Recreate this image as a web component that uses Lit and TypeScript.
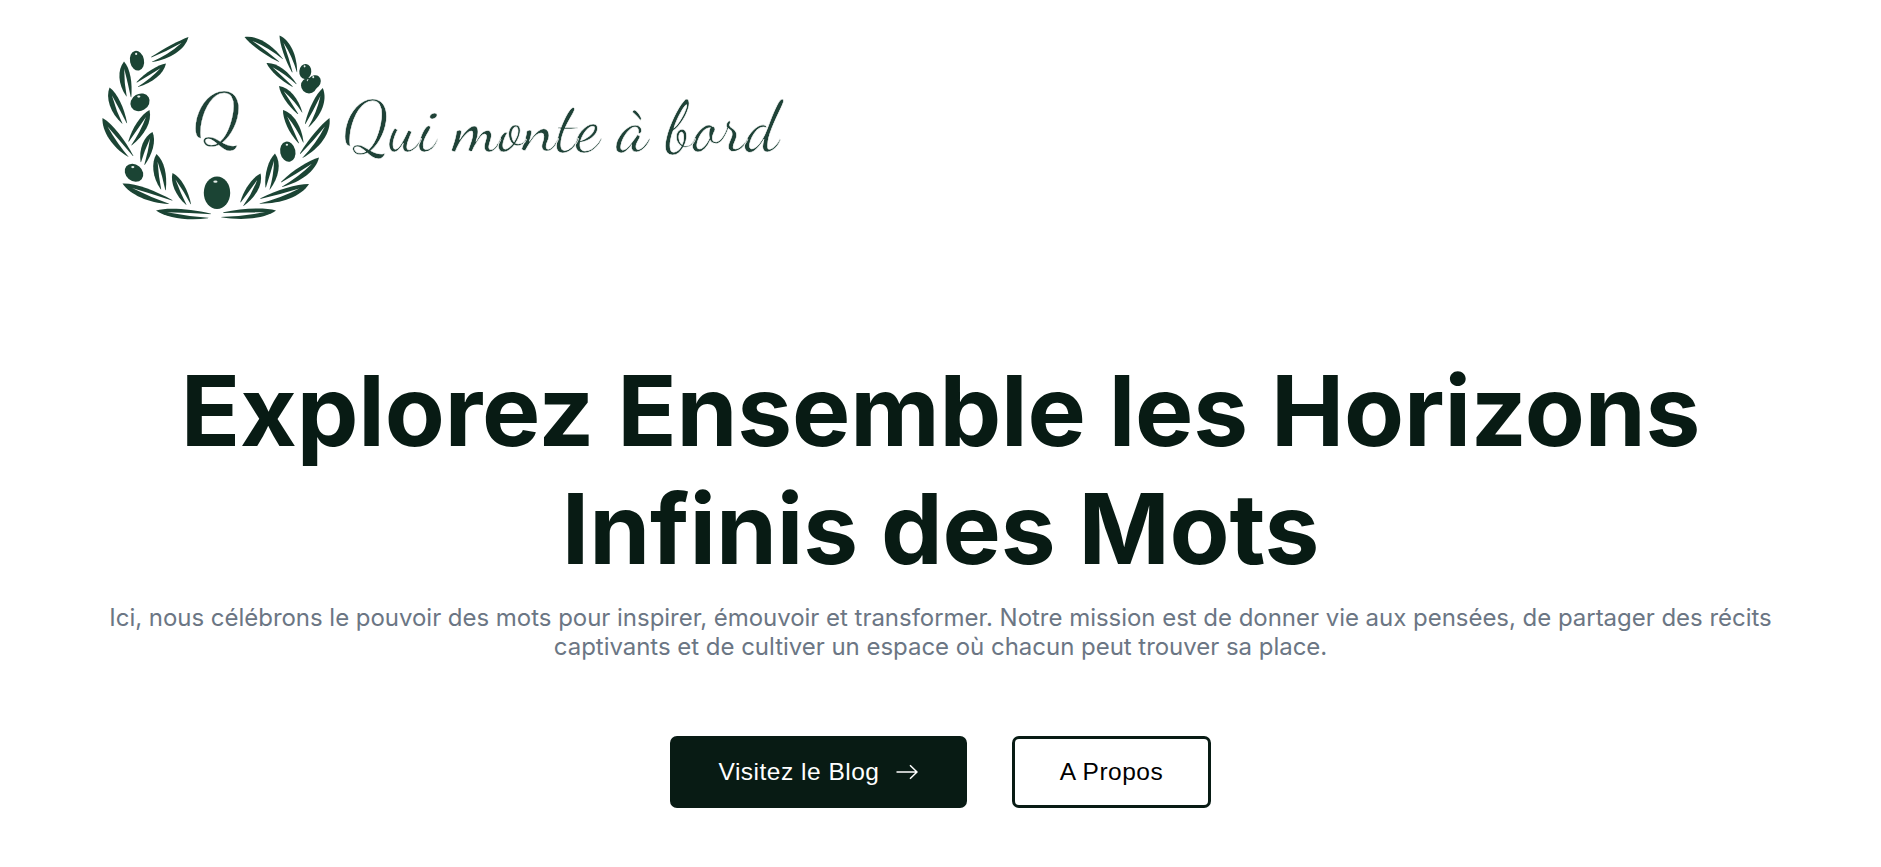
import { LitElement, html, svg, css } from "lit";
import { customElement } from "lit/decorators.js";

// tip x, tip y, stem x, stem y, half width, bend
type Leaf = [number, number, number, number, number, number];
// centre x, centre y, radius x, radius y, rotation
type Olive = [number, number, number, number, number];

const LEAVES: Leaf[] = [
  [188.5, 37, 151, 60.5, 5, -3],
  [166, 63.5, 137, 85.5, 5, -1],
  [124, 61.5, 129.5, 97.5, 6, 2],
  [109.5, 87.5, 125.5, 124, 6, 2],
  [149.5, 110, 130, 144.5, 6, -1],
  [102.5, 118, 132, 157, 6, 2.5],
  [152.5, 132, 143, 164.5, 6, 1],
  [156.5, 154, 164, 190.5, 6.2, 1],
  [172.5, 173, 189.5, 205, 5.6, 1],
  [122.5, 183.5, 172, 202, 5.8, 2],
  [156, 210.5, 211, 215.5, 5, 1.5],
  [244.5, 37, 282, 60.5, 5.2, -2],
  [279.5, 35.5, 295.5, 73, 5.2, -2],
  [266.5, 63, 295.5, 85.5, 5, -1],
  [279, 86, 301, 113.5, 5.2, -1],
  [322.8, 88, 307, 126.5, 6, -2],
  [283, 110, 302, 143.5, 5.8, -1],
  [329.5, 118, 301, 157, 6, -3],
  [319, 157.5, 281, 185.5, 5.8, -2],
  [309, 184, 259, 202, 6, -2],
  [275, 153.5, 268, 189.5, 6.2, -1],
  [260.5, 173.5, 242, 205, 5.8, -1],
  [276, 210.5, 221, 215.5, 5.2, -1],
];

const OLIVES: Olive[] = [
  [137, 60.7, 7, 10, -12],
  [140, 102.3, 10, 8.4, -30],
  [134, 172.7, 10, 8.2, 40],
  [217, 192.7, 13.2, 16.2, 0],
  [305.3, 71.5, 6, 7.6, 5],
  [309, 85.6, 8, 7.8, 0],
  [314, 82.3, 6.2, 7.6, 40],
  [287.8, 151.7, 7.6, 10.2, -12],
];

@customElement("brand-logo")
export class BrandLogo extends LitElement {
  static styles = css`
    :host { display: block; width: 700px; height: 200px; }
    svg { display: block; }
    .ink { fill: #1b4434; }
    .vein { fill: #fff; }
    .shine { fill: #e6eeea; }
    text {
      font-family: "Dancing Script", "Liberation Serif", cursive;
      fill: #1f4237;
      stroke: #fff;
      stroke-width: 0.6px;
    }
    .name { font-size: 71px; }
    .initial { font-size: 72px; stroke-width: 0.3px; }
  `;

  private leaf([x1, y1, x2, y2, w, b]: Leaf) {
    const l = Math.hypot(x2 - x1, y2 - y1);
    const a = (Math.atan2(y2 - y1, x2 - x1) * 180) / Math.PI;
    const body = `M0 0C${l * 0.22} ${b - w * 1.2} ${l * 0.62} ${b - w * 1.2} ${l} -1.8L${l * 0.95} 3C${l * 0.6} ${b + w * 1.25} ${l * 0.2} ${b + w} 0 0Z`;
    const vein = `M${l * 0.2} ${b * 0.45}Q${l * 0.6} ${b * 0.8 - 2.2} ${l + 1} -1.4L${l} 2.6Q${l * 0.6} ${b * 0.8 + 1.7} ${l * 0.2} ${b * 0.45}Z`;
    return svg`<g transform="translate(${x1} ${y1}) rotate(${a})"><path class="ink" d=${body}></path><path class="vein" d=${vein}></path></g>`;
  }

  private olive([x, y, rx, ry, r]: Olive) {
    return svg`<g transform="translate(${x} ${y})"><ellipse class="ink" rx=${rx} ry=${ry} transform="rotate(${r})"></ellipse><ellipse class="shine" cx=${-rx * 0.12} cy=${-ry * 0.68} rx=${rx * 0.16} ry="1.1"></ellipse></g>`;
  }

  render() {
    return html`<svg width="700" height="200" viewBox="95 25 700 200" role="img" aria-label="Qui monte à bord">
      ${LEAVES.map((l) => this.leaf(l))}
      ${OLIVES.map((o) => this.olive(o))}
      <text class="initial" x="193" y="141.5">Q</text>
      <text class="name" x="342.5" y="149.5" textLength="436" lengthAdjust="spacingAndGlyphs">Qui monte à bord</text>
    </svg>`;
  }
}

@customElement("app-root")
export class AppRoot extends LitElement {
  static styles = css`
    :host {
      display: block;
      box-sizing: border-box;
      height: 867px;
      overflow: hidden;
      background: #fff;
      font-family: Inter, sans-serif;
    }
    header { padding: 25px 0 0 95px; }
    main {
      display: flex;
      flex-direction: column;
      align-items: center;
      padding: 127px 95px 0;
      text-align: center;
    }
    h1 {
      margin: 0;
      color: #081b14;
      font-size: 98px;
      font-weight: 700;
      line-height: 118px;
      letter-spacing: -0.18px;
    }
    p {
      margin: 15px 0 0;
      color: #6b7684;
      font-size: 24px;
      font-weight: 400;
      line-height: 29px;
      letter-spacing: -0.03px;
    }
    .line { display: block; white-space: nowrap; }
    .actions { display: flex; gap: 45px; margin-top: 75px; }
    .btn {
      display: flex;
      align-items: center;
      justify-content: center;
      box-sizing: border-box;
      height: 72px;
      border: 3px solid #081b14;
      border-radius: 7px;
      font: 24.5px/28px "Liberation Sans", Arial, sans-serif;
      letter-spacing: 0.5px;
      text-decoration: none;
      white-space: nowrap;
    }
    .primary { width: 297px; gap: 17px; background: #081b14; color: #fff; }
    .outline { width: 199px; background: #fff; color: #000; }
    .arrow { display: block; fill: none; stroke: #fff; stroke-width: 1.5; }
  `;

  render() {
    return html`
      <header><brand-logo></brand-logo></header>
      <main>
        <h1>
          <span class="line">Explorez Ensemble les Horizons</span>
          <span class="line">Infinis des Mots</span>
        </h1>
        <p>
          <span class="line">Ici, nous célébrons le pouvoir des mots pour inspirer, émouvoir et transformer. Notre mission est de donner vie aux pensées, de partager des récits</span>
          <span class="line">captivants et de cultiver un espace où chacun peut trouver sa place.</span>
        </p>
        <div class="actions">
          <a class="btn primary">
            <span>Visitez le Blog</span>
            <svg class="arrow" width="22" height="16" viewBox="0 0 22 16">
              <path d="M0.5 8H21M14 1.2L21 8L14 14.8" stroke-linejoin="round"></path>
            </svg>
          </a>
          <a class="btn outline">A Propos</a>
        </div>
      </main>
    `;
  }
}
